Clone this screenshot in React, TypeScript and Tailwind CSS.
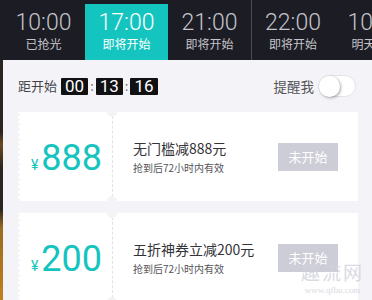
const tabs = [
  { time: "10:00", label: "已抢光", active: false },
  { time: "17:00", label: "即将开始", active: true },
  { time: "21:00", label: "即将开始", active: false },
  { time: "22:00", label: "即将开始", active: false, sep: true },
  { time: "10:00", label: "明天开始", active: false },
];

const coupons = [
  { amount: "888", title: "无门槛减888元", note: "抢到后72小时内有效" },
  { amount: "200", title: "五折神券立减200元", note: "抢到后72小时内有效" },
];

function TimeBox({ v }: { v: string }) {
  return (
    <span className="h-[17px] px-[4px] bg-[#111114] text-white text-[17px] leading-[17px] rounded-[1px] flex items-center font-['Roboto',sans-serif]">
      {v}
    </span>
  );
}

function Coupon({ amount, title, note }: { amount: string; title: string; note: string }) {
  return (
    <div className="relative flex h-[89px] bg-white shrink-0">
      {/* wavy left edge */}
      <div className="w-[3px] h-full bg-[radial-gradient(circle_at_0_50%,#f4f4f8_1.5px,transparent_2px)] bg-[length:3px_5px]" />
      <div className="w-[91px] flex items-center justify-center pt-[2px]">
        <div className="flex items-baseline text-[#15c4be] font-['Roboto',sans-serif]">
          <span className="text-[14px] mr-[3px]">¥</span>
          <span className="text-[36px] leading-none">{amount}</span>
        </div>
      </div>
      <div className="w-0 border-l border-dashed border-[#e2e2e6] my-[4px]" />
      <span className="absolute left-[89px] -top-[5px] w-[10px] h-[10px] rounded-full bg-[#f4f4f8]" />
      <span className="absolute left-[89px] -bottom-[5px] w-[10px] h-[10px] rounded-full bg-[#f4f4f8]" />
      <div className="flex-1 flex items-center pl-[20px] pr-[20px]">
        <div className="flex-1 flex flex-col">
          <span className="text-[14px] leading-[18px] text-[#333338]">{title}</span>
          <span className="text-[10px] leading-[14px] text-[#55555a] mt-[4px]">{note}</span>
        </div>
        <div className="w-[60px] h-[28px] bg-[#cdcdd7] text-white text-[13px] flex items-center justify-center">
          未开始
        </div>
      </div>
    </div>
  );
}

export default function App() {
  return (
    <div className="relative w-[372px] h-[300px] overflow-hidden bg-[#1c1c25] font-['Noto_Sans_CJK_SC','Noto_Sans',sans-serif]">
      {/* time tabs */}
      <div className="flex h-[60px] pl-[2px] overflow-hidden">
        {tabs.map((t, i) => (
          <div
            key={i}
            className={
              t.active
                ? "w-[83px] shrink-0 mt-[4px] h-[57px] bg-[#14c4bf] text-white flex flex-col items-center pt-[6px]"
                : t.sep
                ? "w-[83px] shrink-0 border-l border-[#4a4a52] text-[#c4c4c9] flex flex-col items-center pt-[10px]"
                : "w-[83px] shrink-0 text-[#c4c4c9] flex flex-col items-center pt-[10px]"
            }
          >
            <span className="text-[23px] leading-[26px] font-light font-['Roboto',sans-serif]">{t.time}</span>
            <span className="text-[12px] leading-[16px]">{t.label}</span>
          </div>
        ))}
      </div>

      {/* panel */}
      <div className="flex h-[240px]">
        <div className="w-[3px] bg-[linear-gradient(#2a2520_0%,#2a2520_30%,#6a4a22_35%,#2a2520_45%,#2a2520_62%,#9a6a20_70%,#c0801e_100%)]" />
        <div className="flex-1 bg-[#f4f4f8] pl-[15px] pr-[14px] flex flex-col">
          <div className="h-[52px] flex items-center shrink-0">
            <span className="text-[13px] text-[#444448] mr-[4px]">距开始</span>
            <TimeBox v="00" />
            <span className="text-[13px] text-[#777] mx-[2px]">:</span>
            <TimeBox v="13" />
            <span className="text-[13px] text-[#777] mx-[2px]">:</span>
            <TimeBox v="16" />
            <span className="ml-auto text-[13.5px] text-[#555559] mr-[4px]">提醒我</span>
            <span className="w-[38px] h-[22px] rounded-full bg-white border border-[#e4e4e8] flex items-center mr-[2px]">
              <span className="w-[21px] h-[21px] rounded-full bg-white shadow-[1px_1px_3px_rgba(0,0,0,0.35)]" />
            </span>
          </div>
          <div className="flex flex-col gap-[12px]">
            {coupons.map((c, i) => (
              <Coupon key={i} {...c} />
            ))}
          </div>
        </div>
      </div>

      {/* watermark */}
      <div className="absolute right-[8px] bottom-[4px] flex flex-col items-center text-[#d2d2da] font-['Liberation_Serif','Noto_Sans_CJK_SC',serif] pointer-events-none">
        <span className="text-[19px] leading-[22px] tracking-[2px] opacity-80">趣流网</span>
        <span className="text-[9px] leading-[11px] opacity-80">www.qfbu.com</span>
      </div>
    </div>
  );
}
